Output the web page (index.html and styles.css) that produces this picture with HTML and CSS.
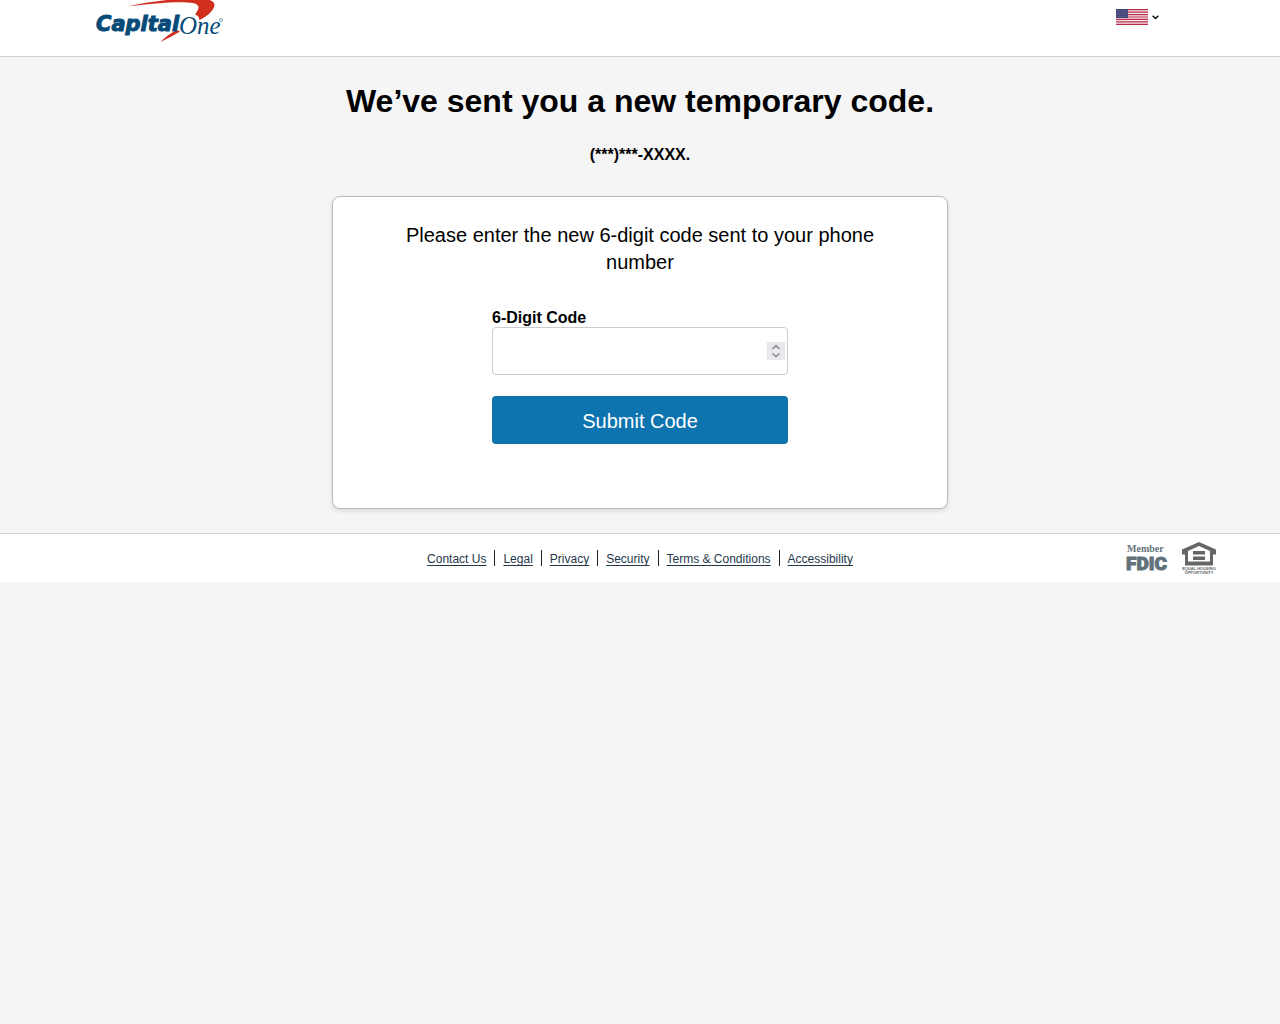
FILE: index.html
```html
<!DOCTYPE html>
<html lang="en">
<head>
<meta charset="utf-8">
<meta name="viewport" content="width=device-width, initial-scale=1">
<title>Temporary code</title>
<link rel="stylesheet" href="styles.css">
</head>
<body>
<header class="header">
  <a class="logo" href="#" aria-label="Capital One">
    <svg width="128" height="44" viewBox="0 0 128 44">
      <path d="M32 6.300C54 1.500 76-1 96-2C108-2.500 119 0 118.500 5C118 11 110 17 103.500 20C103 16 101 15 99 14.500C104 8 104 4.500 97 3C84 1 60 3 32 6.300Z" fill="#d22e1e"/>
      <path d="M64.500 42C69 37 75 33 80.500 30L84 31.500C78 35 71 39 64.500 42Z" fill="#d22e1e"/>
      <text class="logo-bold" x="0" y="31">Capital</text>
      <text class="logo-serif" x="83" y="34">One</text>
      <circle cx="125" cy="20" r="1.500" fill="none" stroke="#4c7595" stroke-width=".7"/>
    </svg>
  </a>
  <button class="language" type="button" aria-label="Choose language">
    <svg width="32" height="16" viewBox="0 0 32 16">
      <path fill="#f6e8ec" d="M0 0h32v16H0z"/>
      <path stroke="#b72e4b" stroke-width="1.230" d="M0 .62h32M0 3.080h32M0 5.540h32M0 8h32M0 10.460h32M0 12.920h32M0 15.380h32"/>
      <path fill="#444578" d="M0 0h12v9H0z"/>
      <path stroke="#7577a0" stroke-width=".8" stroke-dasharray="1 1.200" d="M1 1.500h10M2 3.500h9M1 5.500h10M2 7.500h9"/>
    </svg>
    <svg width="7" height="5" viewBox="0 0 7 5"><path d="M.6.700 3.500 3.500 6.400.7" fill="none" stroke="#111" stroke-width="1.500"/></svg>
  </button>
</header>
<main class="main">
  <h1 class="title">We’ve sent you a new temporary code.</h1>
  <p class="phone">(***)***-XXXX.</p>
  <section class="card">
    <p class="intro">Please enter the new 6-digit code sent to your phone number</p>
    <form class="form">
      <label class="label" for="code">6-Digit Code</label>
      <div class="field">
        <input class="input" id="code" type="number">
        <svg class="spinner" width="18" height="18" viewBox="0 0 18 18" aria-hidden="true">
          <path fill="#e9e9ed" d="M0 0h18v18H0z"/>
          <path d="m5.500 6.800 3.500-3.200 3.500 3.200M5.500 11.300 9 14.500l3.500-3.200" fill="none" stroke="#8f8f9d" stroke-width="1.600"/>
        </svg>
      </div>
      <button class="submit" type="button">Submit Code</button>
    </form>
  </section>
</main>
<footer class="footer">
  <nav class="links">
    <a class="link" href="#">Contact Us</a>
    <a class="link" href="#">Legal</a>
    <a class="link" href="#">Privacy</a>
    <a class="link" href="#">Security</a>
    <a class="link" href="#">Terms &amp; Conditions</a>
    <a class="link" href="#">Accessibility</a>
  </nav>
  <div class="badges">
    <svg width="44" height="34" viewBox="0 0 44 34">
      <text class="member" x="3" y="11">Member</text>
      <text class="fdic" x="2" y="29">FDIC</text>
    </svg>
    <svg width="34" height="34" viewBox="0 0 34 34">
      <path fill="#666" fill-rule="evenodd" d="M17 1 34 8.500v5h-3v11H3v-11H0v-5ZM17 5 6 10v10.500h22V10Z"/>
      <path fill="#666" d="M11 10h12v3.500H11zM11 15.500h12V19H11z"/>
      <text class="housing" x="17" y="29" text-anchor="middle">EQUAL HOUSING</text>
      <text class="housing" x="17" y="33" text-anchor="middle">OPPORTUNITY</text>
    </svg>
  </div>
</footer>
</body>
</html>
```
FILE: styles.css
```css
* { box-sizing: border-box; }
body { margin: 0; background: #f5f5f5; color: #000; font-family: "Liberation Sans", Arial, sans-serif; font-size: 16px; }
h1, p { margin: 0; }
svg { display: block; }
.header { display: flex; justify-content: space-between; align-items: flex-start; height: 57px; padding: 0 121px 0 96px; background: #fff; border-bottom: 1px solid #d3d3d3; }
.logo-bold { font: italic bold 21px "DejaVu Sans", sans-serif; fill: #064b78; stroke: #064b78; stroke-width: 1px; }
.logo-serif { font: italic 25px "Liberation Serif", serif; fill: #064b78; }
.language { display: flex; align-items: center; gap: 4px; margin-top: 9px; padding: 0; border: 0; background: none; cursor: pointer; }
.main { display: flex; flex-direction: column; align-items: center; padding: 24px 16px; }
.title { font-size: 32px; line-height: 40px; text-align: center; }
.phone { margin-top: 24px; font-weight: bold; line-height: 20px; }
.card { width: 100%; max-width: 616px; margin-top: 31px; padding: 25px 64px 64px; background: #fff; border: 1px solid #bbb; border-radius: 8px; box-shadow: 0 2px 4px rgba(0, 0, 0, .12); }
.intro { font-size: 20px; line-height: 27px; text-align: center; }
.form { display: flex; flex-direction: column; max-width: 296px; margin: 32px auto 0; }
.label { font-weight: bold; line-height: 19px; }
.field { position: relative; }
.input { display: block; width: 100%; height: 48px; padding: 0 24px 0 12px; border: 1px solid #ccc; border-radius: 4px; background: #fff; font: inherit; appearance: textfield; }
.spinner { position: absolute; top: 15px; right: 3px; pointer-events: none; }
.submit { height: 48px; margin-top: 21px; padding: 2px 0 0; border: 0; border-radius: 4px; background: #0d74af; color: #fff; font: 20px "Liberation Sans", Arial, sans-serif; cursor: pointer; }
.footer { display: grid; grid-template-columns: 1fr auto 1fr; align-items: center; height: 49px; padding: 0 64px; background: #fff; border-top: 1px solid #d3d3d3; }
.links { grid-column: 2; display: flex; }
.link { height: 16px; color: #25374a; font-size: 12px; line-height: 18px; text-decoration: underline; text-underline-offset: 2px; }
.link + .link { margin-left: 8px; padding-left: 8px; border-left: 1px solid #222; }
.badges { display: flex; justify-content: flex-end; align-items: center; gap: 14px; }
.member { font: bold 10px "Liberation Serif", serif; fill: #63727a; }
.fdic { font: 900 19px Roboto, sans-serif; fill: #63727a; stroke: #63727a; stroke-width: 1px; }
.housing { font: bold 4px "Liberation Sans", sans-serif; fill: #666; }
```
